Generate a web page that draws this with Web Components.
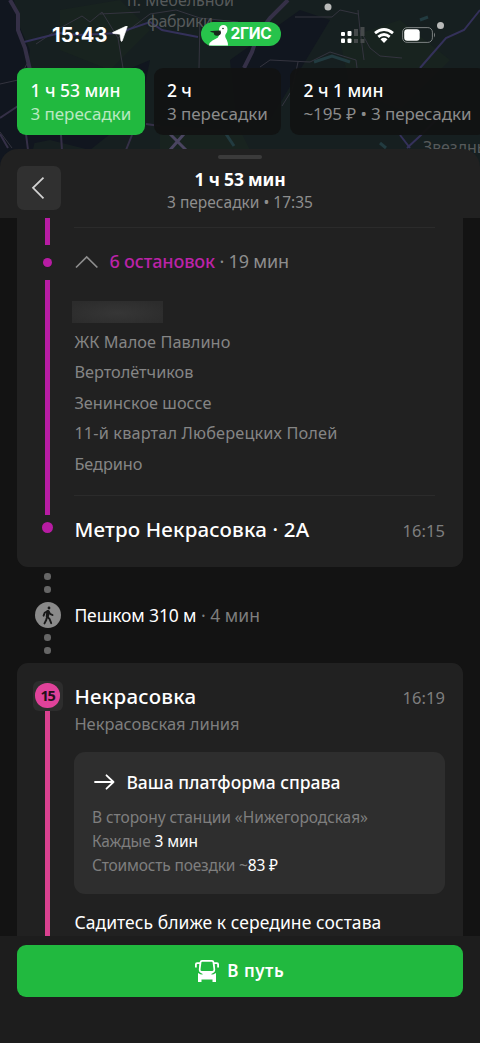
<!DOCTYPE html>
<html lang="ru">
<head>
<meta charset="utf-8">
<title>Маршрут</title>
<style>
html,body{margin:0;padding:0;background:#131313}
body{font-family:"Noto Sans","Open Sans",sans-serif;color:#fff;width:480px;height:1043px;overflow:hidden}
</style>
</head>
<body>
<route-app></route-app>
<script>
const define = (name, html, init) => customElements.define(name, class extends HTMLElement {
  constructor(){
    super();
    const t = document.createElement('template');
    t.innerHTML = html;
    this.attachShadow({mode:'open'}).append(t.content.cloneNode(true));
  }
  connectedCallback(){ if (init) init(this); }
});

/* One line of text; spacing is tuned so that the line takes the width w. */
define('fit-text', `<style>:host{display:block;white-space:pre;flex:none}span{display:inline-block;line-height:inherit;vertical-align:top}</style><span><slot></slot></span>`, el => {
  const a = n => el.getAttribute(n);
  el.style.fontSize = a('s') + 'px';
  el.style.lineHeight = a('l') + 'px';
  el.style.height = a('l') + 'px';
  if (a('b')) el.style.fontWeight = a('b');
  if (a('c')) el.style.color = a('c');
  const span = el.shadowRoot.querySelector('span');
  const w = span.getBoundingClientRect().width;
  el.style.letterSpacing = ((+a('w') - w) / el.textContent.length).toFixed(3) + 'px';
});

define('city-map', `<style>:host{display:block}svg{display:block}</style>
<svg width="480" height="170" viewBox="0 0 480 170" fill="none" font-family="Noto Sans" font-size="16">
<rect width="480" height="170" fill="#161f20"/>
<path fill="#11161f" d="M0 0H14L22 40 14 80 40 120 28 170H0ZM12 10 30 50 24 90 60 98 150 60 140 110 90 150 50 140 0 150ZM230 60 300 10 330 20 300 70 270 120 235 110Z"/>
<path fill="#18231f" d="M60 10 120 0 150 30 110 70 60 50ZM340 40 400 20 450 60 400 110 350 90ZM160 125 240 130 250 150H160Z"/>
<g stroke="#34343f"><path d="M0 84 18 80 28 62M36 44 60 28 82 16 90 22 102 12 118 38 122 62 126 86M118 38 150 14 176 10 200 18 199 68M200 18 238 22M100 14 140 12M0 132 12 148M295 17H332L340 10 358 14M358 10 360 30 370 48 380 56 402 58M260 67 270 60 310 62 330 52 356 60 357 68M298 62 292 90 282 106M360 30 364 60"/></g>
<path stroke="#34315a" stroke-width="2" d="M24 42 40 38 60 33 78 35 100 34 118 33 150 22 162 30 198 37M480 10 464 30 446 38 420 68M407 148 420 136 438 118M400 135 410 148"/>
<path stroke="#353047" stroke-width="4" d="M10 0 18 14 18 30 25 48 30 70"/>
<path stroke="#353047" stroke-width="4" d="M288 0 270 18 258 34 252 52 244 68"/>
<path stroke="#353047" stroke-width="2" d="M0 118 18 106M26 134 28 150M146 124 160 126M132 135 126 150M61 135 62 150M0 134 8 148"/>
<path stroke="#4a4560" stroke-width="3" d="M170 134 186 150M184 134 170 150"/>
<path stroke="#223b40" stroke-width="3" d="M314 62 332 56 350 62M420 20 428 17M226 134 234 146M380 143 386 148"/>
<g fill="#565a5b"><text x="127" y="6" textLength="107">п. Мебельной</text><text x="147" y="27" textLength="66">фабрики</text><text x="423" y="153" textLength="66">Звездны</text></g>
<g fill="#b9bab9"><circle cx="328" cy="7" r="3.5"/><circle cx="440.500" cy="25.500" r="3.500"/></g>
</svg>`);

define('status-bar', `<style>
:host{display:flex;height:24px;align-items:center;font-family:Inter,sans-serif}
.time{width:55px;margin-left:52px;position:relative;top:1px}.loc{margin-left:5px;width:16px}
.pill{margin-left:72.500px;width:80px;height:24px;border-radius:12px;background:#27c34b;display:flex;align-items:center;box-sizing:border-box;padding-left:8px;gap:3px}
svg{display:block;flex:none}.cell{margin-left:59px}.wifi{margin-left:9px}.bat{margin-left:8px}
svg.cell,svg.wifi,svg.bat{position:relative;top:1px}
</style>
<fit-text class="time" w="55.500" s="20" l="26" b="700">15:43</fit-text>
<svg class="loc" width="16" height="16" viewBox="0 0 16 16"><path d="M15.300.6 10.200 15q-.8 1-1.300-.3L8 8.200 1.200 7.400q-1.400-.4-.2-1.100L14.300.1Q15.400-.1 15.300.6Z" fill="#fff" stroke="#fff" stroke-width=".6"/></svg>
<div class="pill"><svg width="19" height="24" viewBox="0 0 19 24"><path fill="#fff" d="M10 7.500Q10.500 3 14.300 3 18.500 3 18.500 7.500 18.500 10.500 16.500 12.500 15.500 14.500 17.800 18 19 20.500 19 23.500H0q.5-3.500 3.500-5 3-1.500 5.500-3 1.500-2 1-5Z"/><path fill="#17271b" d="M11.500 8.500Q6 8.600.8 9.300q1.500 1.200 4 1.500 0 3.200 3.500 3 3.500-.4 3.700-3Z"/><circle cx="14" cy="6.500" r=".8" fill="#17271b"/></svg><fit-text w="41" s="15.500" l="24" b="700">2ГИС</fit-text></div>
<svg class="cell" width="25" height="17" viewBox="0 0 25 17" fill="#fff"><path fill="#45494a" d="M14 2h4v7h-4zM20.500 0h4v9h-4zM14 12h4v4h-4zM20.500 12h4v4h-4z"/><rect x="1" y="5" width="4" height="4" rx="1"/><rect x="7.500" y="4" width="4" height="5" rx="1"/><rect x="1" y="11.500" width="4" height="4.500" rx="1"/><rect x="7.500" y="11.500" width="4" height="4.500" rx="1"/></svg>
<svg class="wifi" width="20" height="15" viewBox="0 0 20 15" fill="none" stroke="#fff" stroke-width="2.800"><path d="M1 5.200Q10-2.200 19 5.200M4.300 8.800q5.700-4.600 11.400 0"/><path fill="#fff" stroke="none" d="M6.500 11.300q3.500-2.900 7 0L10 15Z"/></svg>
<svg class="bat" width="34" height="16" viewBox="0 0 34 16"><rect x=".6" y=".6" width="29.800" height="14.800" rx="4.500" fill="none" stroke="#7c8181"/><rect x="2.200" y="2.200" width="15.500" height="11.600" rx="3" fill="#fff"/><path d="M32 5.500q2 2.500 0 5Z" fill="#7c8181"/></svg>`);

define('route-tab', `<style>
:host{display:block;box-sizing:border-box;flex:none;height:67.500px;width:127.500px;border-radius:9px;padding:10px 0 0 13px;background:#121313f5}
:host([active]){background:#21b93f}
:host([wide]){width:196px}
</style><slot></slot>`);

define('back-button', `<style>:host{display:flex;width:43.500px;height:43.500px;border-radius:7px;background:#303030;align-items:center;justify-content:center}</style>
<svg width="44" height="44" viewBox="0 0 44 44" fill="none" stroke="#d2d2d2" stroke-width="1.800"><path d="M26.800 11.500 16.200 21.800 26.800 32.500"/></svg>`);

define('sheet-header', `<style>
:host{display:grid;grid-template-columns:61px 1fr 61px;height:69px;background:#212121;border-radius:18px 18px 0 0;position:relative;box-sizing:border-box;padding-top:17px}
i{position:absolute;left:218px;top:6px;width:44px;height:4px;border-radius:2px;background:#3b3b3b}
back-button{margin-left:17px}
div{display:flex;flex-direction:column;align-items:center;padding-top:1px}
</style><i></i><back-button></back-button><div><slot></slot></div>`);

define('rail-bar', `<style>:host{display:block;width:5px;flex:none;background:var(--line)}</style>`, el => { el.style.height = el.getAttribute('h') + 'px'; });
define('rail-dot', `<style>:host{display:block;flex:none;border-radius:50%;background:var(--line)}</style>`, el => { const d = el.getAttribute('d'); el.style.width = el.style.height = d + 'px'; el.style.margin = el.getAttribute('m'); });

define('route-card', `<style>
:host{display:flex;background:#212121;margin:0 17.500px 0 17px;box-sizing:border-box}
.rail{width:61px;display:flex;flex-direction:column;align-items:center;flex:none}
.body{margin-left:-3.600px;width:370.500px}
</style><div class="rail"><slot name="rail"></slot></div><div class="body"><slot></slot></div>`);

define('line-badge', `<style>:host{display:flex;width:30px;height:30px;border-radius:6px;background:#2d2d2d;align-items:center;justify-content:center;margin-top:18px}
div{width:24.500px;height:24.500px;border-radius:50%;background:#e0429a;display:flex;justify-content:center;align-items:center;color:#241019;font-family:"Open Sans",sans-serif}</style><div><fit-text w="14.500" s="14.500" l="24" b="700"><slot></slot></fit-text></div>`, el => {
  const t = el.shadowRoot.querySelector('fit-text');
  t.style.letterSpacing = '-1.2px';
});

define('walk-step', `<style>
:host{display:flex;height:96px;margin:0 17.500px 0 17px}
.rail{width:61px;display:flex;flex-direction:column;align-items:center;--line:#666;padding-top:6.500px;box-sizing:border-box}
.ic{width:26px;height:26px;border-radius:50%;background:#8a8a8a;margin:9px 0 6.500px;flex:none}
.t{margin:36px 0 0 -3.600px;display:flex}
</style><div class="rail"><rail-dot d="6.500" m="0 0 6.500px"></rail-dot><rail-dot d="6.500" m="0"></rail-dot>
<svg class="ic" viewBox="0 0 26 26" fill="none" stroke="#191919" stroke-width="1.900" stroke-linecap="round" stroke-linejoin="round"><circle cx="14" cy="6" r="1.400" fill="#191919" stroke="none"/><path d="m12.500 9-.8 5.300 2.800 2.600 1.700 4.300M11.700 16l-.5 2-1.700 3.400M12.300 9.200 9.700 10.800 8.600 13.700M13.500 9.200l1.500 2.600 2.500 1.200" /><path d="m13 9.500-.3 4.500" stroke-width="2.800"/></svg>
<rail-dot d="6.500" m="0 0 6.500px"></rail-dot><rail-dot d="6.500" m="0"></rail-dot></div><div class="t"><slot></slot></div>`);

define('platform-box', `<style>
:host{display:block;box-sizing:border-box;height:142px;margin-top:17px;border-radius:11px;background:#2e2e2e;padding:18px 0 0 17.500px}
.h{display:flex;align-items:center;height:24px;margin-bottom:11px}
svg{margin-left:1.500px;margin-right:11px;flex:none}
</style><div class="h"><svg width="22" height="16" viewBox="0 0 22 16" fill="none" stroke="#fff" stroke-width="1.800" stroke-linecap="round" stroke-linejoin="round"><path d="M2 8H20.500M13.500 1.300 20.500 8l-7 6.700"/></svg><slot name="title"></slot></div><slot></slot>`);

define('go-footer', `<style>
:host{display:block;height:107px;background:#1d1d1d;padding:9px 17.500px 0 17px;box-sizing:border-box}
div{height:52px;border-radius:9px;background:#21b93f;display:flex;align-items:center;justify-content:center;gap:8px}
</style><div><svg width="24" height="23" viewBox="0 0 24 23"><path fill="#fff" fill-rule="evenodd" d="M7 0H17Q19 0 19.400 2.200H22Q24 2.200 24 4.200V7.500H22.200V4.500Q22.200 4 21.500 4H19.700L20.200 10Q20 12 18.500 12.800L15.800 14.300 18 14.500 21 13V22H17.500V19.500H6.500V22H3V13L6 14.500 8.200 14.300 5.500 12.800Q4 12 3.800 10L4.300 4H2.500Q1.800 4 1.800 4.500V7.500H0V4.200Q0 2.200 2 2.200H4.600Q5 0 7 0ZM7.200 1.800Q6.500 1.800 6.400 2.500L5.500 9.500Q5.500 11 6.800 11H17.200Q18.500 11 18.500 9.500L17.600 2.500Q17.500 1.800 16.800 1.800Z"/></svg><slot></slot></div>`);

define('route-app', `<style>
:host{display:flex;flex-direction:column;width:480px;height:1043px;background:#131313;overflow:hidden;position:relative}
city-map{position:absolute;left:0;top:0;z-index:0}
header{height:149px;flex:none;position:relative;z-index:1;box-sizing:border-box;padding-top:22px;overflow:hidden}
.tabs{display:flex;gap:9px;margin:21.700px 0 0 17.400px}
sheet-header{flex:none;z-index:1}
main{flex:none;height:718px;overflow:hidden;background:#131313;position:relative;z-index:1}
go-footer{flex:none;position:relative;z-index:1}
.one{height:348.500px;border-radius:0 0 11px 11px;--line:#b71ca3}
.two{height:290px;border-radius:11px 11px 0 0;--line:#d9418f}
hr{border:0;height:1px;background:#2b2b2b;margin:0;width:361px}
.stops-h{display:flex;margin-top:21px;align-items:center}
.stops-h svg{margin-right:11px;position:relative;top:1px}
.stops{margin-top:23px}
.hidden{height:30.600px;display:flex;align-items:center}
.hidden b{display:block;width:91px;height:22px;margin:2px 0 0 -2.500px;background:radial-gradient(ellipse at 50% 55%,#363636,#2c2c2c 85%)}
.end{display:flex;justify-content:space-between;margin-top:19px}
</style>
<city-map></city-map>
<header><status-bar></status-bar>
<div class="tabs">
<route-tab active><fit-text w="90" s="17.500" l="24" b="500">1 ч 53 мин</fit-text><fit-text style="margin-top:1px" w="101" s="17" l="22" c="#b9e9c2">3 пересадки</fit-text></route-tab>
<route-tab><fit-text w="25" s="17.500" l="24" b="500">2 ч</fit-text><fit-text style="margin-top:1px" w="101" s="17" l="22" c="#8b8b8b">3 пересадки</fit-text></route-tab>
<route-tab wide><fit-text w="80" s="17.500" l="24" b="500">2 ч 1 мин</fit-text><fit-text style="margin-top:1px" w="168" s="17" l="22" c="#8b8b8b">~195 ₽ • 3 пересадки</fit-text></route-tab>
</div></header>
<sheet-header><fit-text w="91" s="17.500" l="24" b="700">1 ч 53 мин</fit-text><fit-text w="146" s="15.500" l="22" c="#8e8e8e">3 пересадки • 17:35</fit-text></sheet-header>
<main>
<route-card class="one">
<rail-bar slot="rail" h="27"></rail-bar><rail-dot slot="rail" d="9.500" m="12.500px 0"></rail-dot><rail-bar slot="rail" h="235"></rail-bar><rail-dot slot="rail" d="11" m="7px 0 0"></rail-dot>
<hr style="margin-top:9px">
<div class="stops-h"><svg width="24" height="14" viewBox="0 0 24 14" fill="none" stroke="#8e8e8e" stroke-width="1.700"><path d="M2 12.500 12.700 2 23.400 12.500"/></svg><fit-text w="105.500" s="18" l="24" c="#bb23a8" b="500">6 остановок</fit-text><fit-text w="74" s="18" l="24" c="#8e8e8e"> · 19 мин</fit-text></div>
<div class="stops"><div class="hidden"><b></b></div>
<fit-text w="156" s="16.300" l="30.600" c="#858585">ЖК Малое Павлино</fit-text>
<fit-text w="119" s="16.300" l="30.600" c="#858585">Вертолётчиков</fit-text>
<fit-text w="137" s="16.300" l="30.600" c="#858585">Зенинское шоссе</fit-text>
<fit-text w="263" s="16.300" l="30.600" c="#858585">11-й квартал Люберецких Полей</fit-text>
<fit-text w="68" s="16.300" l="30.600" c="#858585">Бедрино</fit-text></div>
<hr style="margin-top:15px">
<div class="end"><fit-text w="235" s="20.500" l="28" b="500">Метро Некрасовка · 2А</fit-text><fit-text w="42.500" s="16.500" l="31" c="#7e7e7e">16:15</fit-text></div>
</route-card>
<walk-step><fit-text w="122" s="17.500" l="24">Пешком 310 м</fit-text><fit-text w="63.500" s="17.500" l="24" c="#7e7e7e"> · 4 мин</fit-text></walk-step>
<route-card class="two">
<line-badge slot="rail">15</line-badge><rail-bar slot="rail" h="240"></rail-bar>
<div class="end"><fit-text w="122" s="20.500" l="28" b="500">Некрасовка</fit-text><fit-text w="42.500" s="16.500" l="31" c="#7e7e7e">16:19</fit-text></div>
<fit-text w="165" s="16.500" l="22" c="#7e7e7e">Некрасовская линия</fit-text>
<platform-box><fit-text slot="title" w="214" s="17.500" l="24" b="500">Ваша платформа справа</fit-text>
<fit-text w="276" s="15.500" l="24" c="#7e7e7e">В сторону станции «Нижегородская»</fit-text>
<fit-text w="106" s="15.500" l="24" c="#7e7e7e">Каждые <span style="color:#fff">3 мин</span></fit-text>
<fit-text w="186" s="15.500" l="24" c="#7e7e7e">Стоимость поездки ~<span style="color:#fff">83 ₽</span></fit-text></platform-box>
<fit-text style="margin-top:16px" w="307" s="17.500" l="24">Садитесь ближе к середине состава</fit-text>
</route-card>
</main>
<go-footer><fit-text w="57" s="17" l="24" b="600">В путь</fit-text></go-footer>`);
</script>
</body>
</html>
